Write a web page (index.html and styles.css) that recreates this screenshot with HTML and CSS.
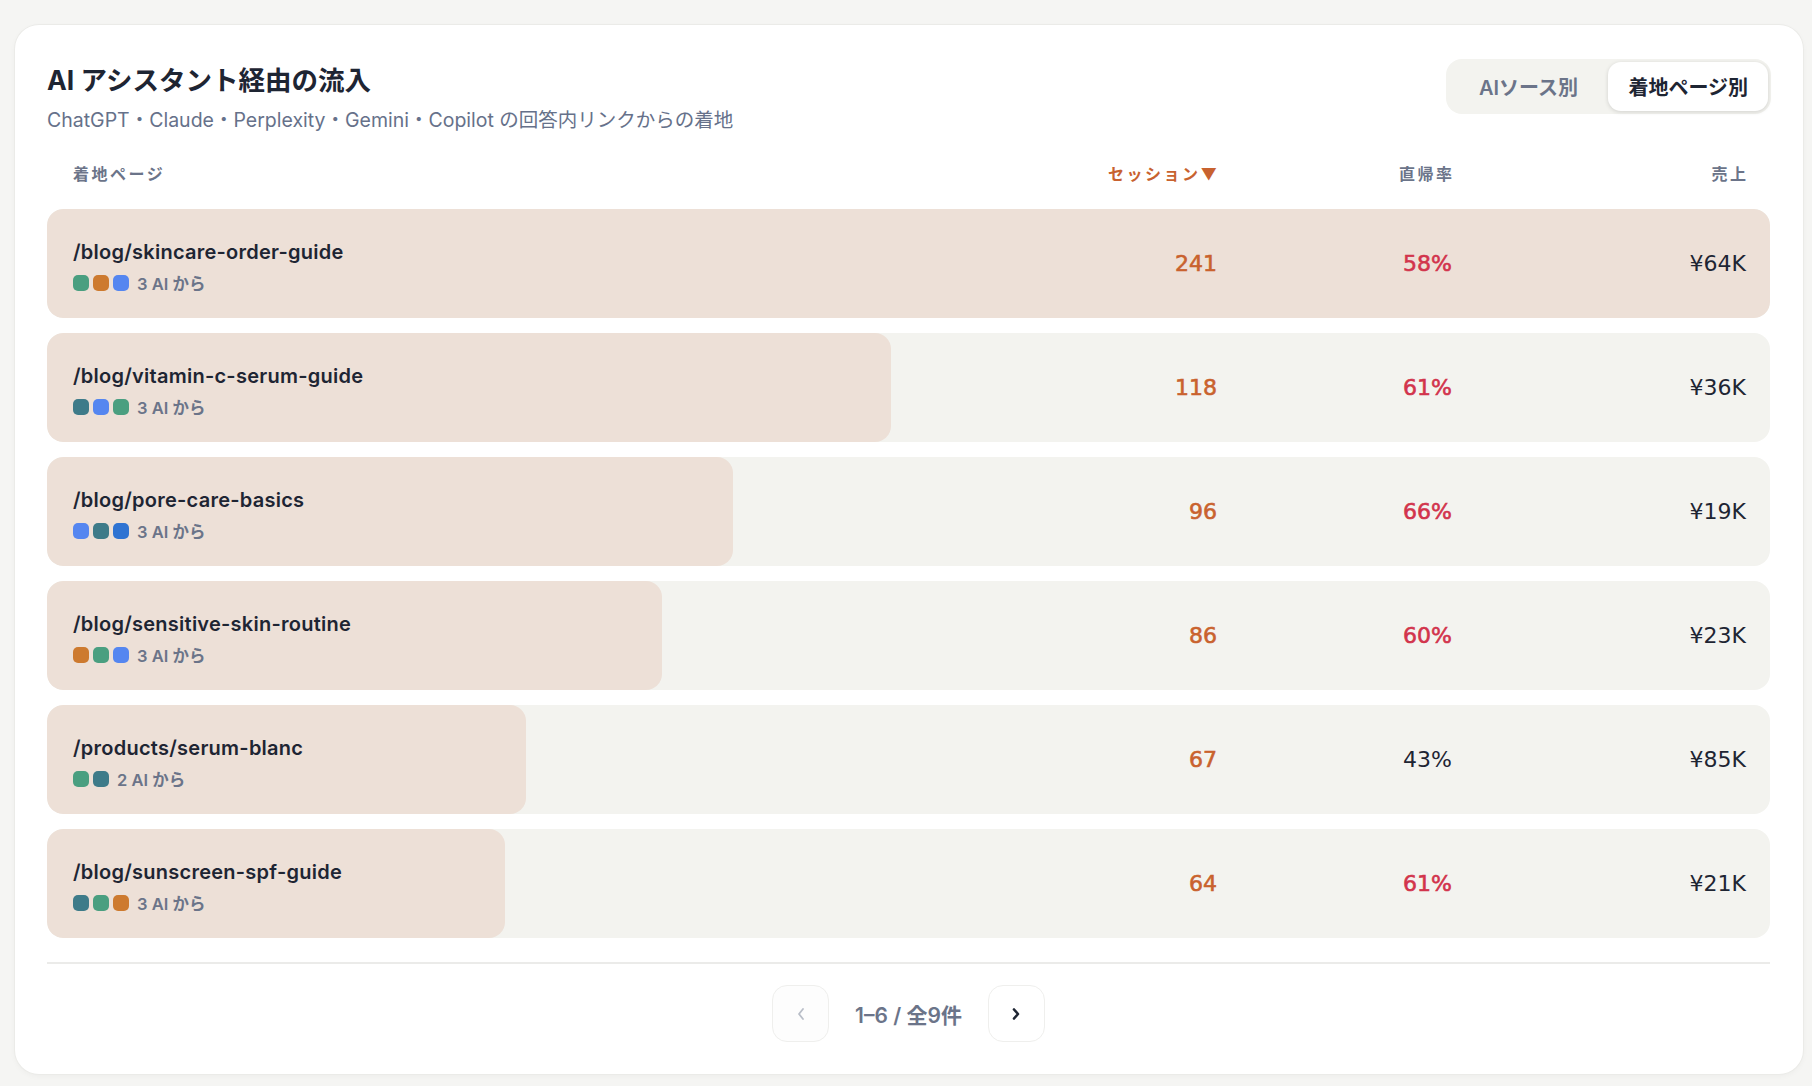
FILE: index.html
```html
<!DOCTYPE html>
<html lang="ja">
<head>
<meta charset="utf-8">
<title>AI アシスタント経由の流入</title>
<link rel="stylesheet" href="styles.css">
</head>
<body>
<div class="card">
	<div class="card-head">
		<div class="titles">
			<h2 class="title">AI アシスタント経由の流入</h2>
			<p class="subtitle">ChatGPT・Claude・Perplexity・Gemini・Copilot の回答内リンクからの着地</p>
		</div>
		<div class="seg">
			<button type="button" class="seg-btn">AIソース別</button>
			<button type="button" class="seg-btn active">着地ページ別</button>
		</div>
	</div>

	<div class="thead">
		<span>着地ページ</span>
		<span class="col-num sorted">セッション▼</span>
		<span class="col-num">直帰率</span>
		<span class="col-num">売上</span>
	</div>

	<div class="rows">
		<div class="row">
			<div class="bar" style="width:100%"></div>
			<div class="page">
				<div class="path">/blog/skincare-order-guide</div>
				<div class="sources">
					<span class="dot green"></span><span class="dot orange"></span><span class="dot blue"></span>
					<span class="src-count">3 AI から</span>
				</div>
			</div>
			<div class="num sessions">241</div>
			<div class="num bounce high">58%</div>
			<div class="num revenue">¥64K</div>
		</div>
		<div class="row">
			<div class="bar" style="width:48.96%"></div>
			<div class="page">
				<div class="path">/blog/vitamin-c-serum-guide</div>
				<div class="sources">
					<span class="dot teal"></span><span class="dot blue"></span><span class="dot green"></span>
					<span class="src-count">3 AI から</span>
				</div>
			</div>
			<div class="num sessions">118</div>
			<div class="num bounce high">61%</div>
			<div class="num revenue">¥36K</div>
		</div>
		<div class="row">
			<div class="bar" style="width:39.83%"></div>
			<div class="page">
				<div class="path">/blog/pore-care-basics</div>
				<div class="sources">
					<span class="dot blue"></span><span class="dot teal"></span><span class="dot navy"></span>
					<span class="src-count">3 AI から</span>
				</div>
			</div>
			<div class="num sessions">96</div>
			<div class="num bounce high">66%</div>
			<div class="num revenue">¥19K</div>
		</div>
		<div class="row">
			<div class="bar" style="width:35.68%"></div>
			<div class="page">
				<div class="path">/blog/sensitive-skin-routine</div>
				<div class="sources">
					<span class="dot orange"></span><span class="dot green"></span><span class="dot blue"></span>
					<span class="src-count">3 AI から</span>
				</div>
			</div>
			<div class="num sessions">86</div>
			<div class="num bounce high">60%</div>
			<div class="num revenue">¥23K</div>
		</div>
		<div class="row">
			<div class="bar" style="width:27.8%"></div>
			<div class="page">
				<div class="path">/products/serum-blanc</div>
				<div class="sources">
					<span class="dot green"></span><span class="dot teal"></span>
					<span class="src-count">2 AI から</span>
				</div>
			</div>
			<div class="num sessions">67</div>
			<div class="num bounce">43%</div>
			<div class="num revenue">¥85K</div>
		</div>
		<div class="row">
			<div class="bar" style="width:26.56%"></div>
			<div class="page">
				<div class="path">/blog/sunscreen-spf-guide</div>
				<div class="sources">
					<span class="dot teal"></span><span class="dot green"></span><span class="dot orange"></span>
					<span class="src-count">3 AI から</span>
				</div>
			</div>
			<div class="num sessions">64</div>
			<div class="num bounce high">61%</div>
			<div class="num revenue">¥21K</div>
		</div>
	</div>

	<div class="pager">
		<button type="button" class="pg-btn" disabled>
			<svg width="10" height="14" viewBox="0 0 10 14"><polyline points="7,2 3,7 7,12" fill="none" stroke="currentColor" stroke-width="1.8" stroke-linecap="round" stroke-linejoin="round"/></svg>
		</button>
		<span class="pg-text">1–6 / 全9件</span>
		<button type="button" class="pg-btn">
			<svg width="10" height="14" viewBox="0 0 10 14"><polyline points="3,2.5 7,7 3,11.5" fill="none" stroke="currentColor" stroke-width="2.6" stroke-linecap="round" stroke-linejoin="round"/></svg>
		</button>
	</div>
</div>
</body>
</html>
```

FILE: styles.css
```css
body{
	margin:0;
	padding:25px 9px 11px 15px;
	background:#f5f5f3;
	font-family:"Inter","Noto Sans CJK JP",sans-serif;
	color:#1e2533;
}
.card{
	background:#fff;
	border-radius:24px;
	box-shadow:0 0 0 1px #ebebe8, 0 2px 6px rgba(0,0,0,.04);
	padding:34px 33px 32px 32px;
}
.card-head{
	display:flex;
	justify-content:space-between;
	align-items:flex-start;
}
.title{
	margin:4px 0 0;
	font-size:26.5px;
	line-height:34px;
	font-weight:700;
	color:#1e2533;
}
.subtitle{
	margin:10px 0 0;
	font-size:19.5px;
	line-height:26px;
	color:#66718a;
}
.seg{
	display:grid;
	grid-template-columns:1fr 1fr;
	padding:3px;
	background:#f3f3ef;
	border-radius:16px;
	margin-right:-1px;
}
.seg-btn{
	border:0;
	background:none;
	height:49px;
	padding:0 20px;
	border-radius:13px;
	font-family:inherit;
	font-size:20px;
	font-weight:600;
	color:#6b7489;
}
.seg-btn.active{
	background:#fff;
	color:#1e2533;
	box-shadow:0 1px 4px rgba(0,0,0,.14);
}

/* table */
.thead,
.row{
	display:grid;
	grid-template-columns:1fr 160px 235px 294px;
	align-items:center;
	padding:0 24px 0 26px;
}
.thead{
	margin-top:30px;
	margin-bottom:24px;
	font-size:16px;
	line-height:22px;
	font-weight:600;
	letter-spacing:2.5px;
	color:#6b7489;
}
.col-num{
	text-align:right;
	margin-right:-2.5px;
}
.thead .sorted{
	color:#c8622f;
}
.rows{
	display:flex;
	flex-direction:column;
	gap:15px;
}
.row{
	position:relative;
	height:109px;
	background:#f3f3ef;
	border-radius:16px;
	overflow:hidden;
}
.bar{
	position:absolute;
	left:0;
	top:0;
	bottom:0;
	background:#ede0d7;
	border-radius:16px;
}
.page,
.num{
	position:relative;
}
.page{
	padding-top:6px;
}
.path{
	font-size:20px;
	line-height:26px;
	font-weight:600;
	letter-spacing:.25px;
	color:#1e2533;
}
.sources{
	display:flex;
	align-items:center;
	gap:4px;
	margin-top:6px;
}
.dot{
	width:16px;
	height:16px;
	border-radius:5px;
}
.dot.green{ background:#4a9f80; }
.dot.orange{ background:#cd7a2f; }
.dot.blue{ background:#5586f0; }
.dot.teal{ background:#3e7b89; }
.dot.navy{ background:#2f73d2; }
.src-count{
	margin-left:4px;
	font-size:16.5px;
	font-weight:600;
	color:#6b7489;
}
.num{
	text-align:right;
	font-family:"DejaVu Sans",sans-serif;
	font-size:22px;
	color:#1e2533;
}
.num.sessions{
	color:#c9622e;
	-webkit-text-stroke:.6px #c9622e;
}
.num.bounce.high{
	color:#d2344c;
	-webkit-text-stroke:.6px #d2344c;
}

/* pager */
.pager{
	margin-top:24px;
	padding-top:21px;
	border-top:2px solid #ebebe9;
	display:flex;
	justify-content:center;
	align-items:center;
	gap:26px;
}
.pg-btn{
	width:57px;
	height:57px;
	border:1px solid #efefed;
	border-radius:15px;
	background:#fff;
	color:#1e2533;
	display:flex;
	align-items:center;
	justify-content:center;
	padding:0;
}
.pg-btn:disabled{
	color:#b9bec8;
	background:#fdfdfd;
}
.pg-text{
	font-size:21px;
	font-weight:600;
	color:#6b7489;
}
```
